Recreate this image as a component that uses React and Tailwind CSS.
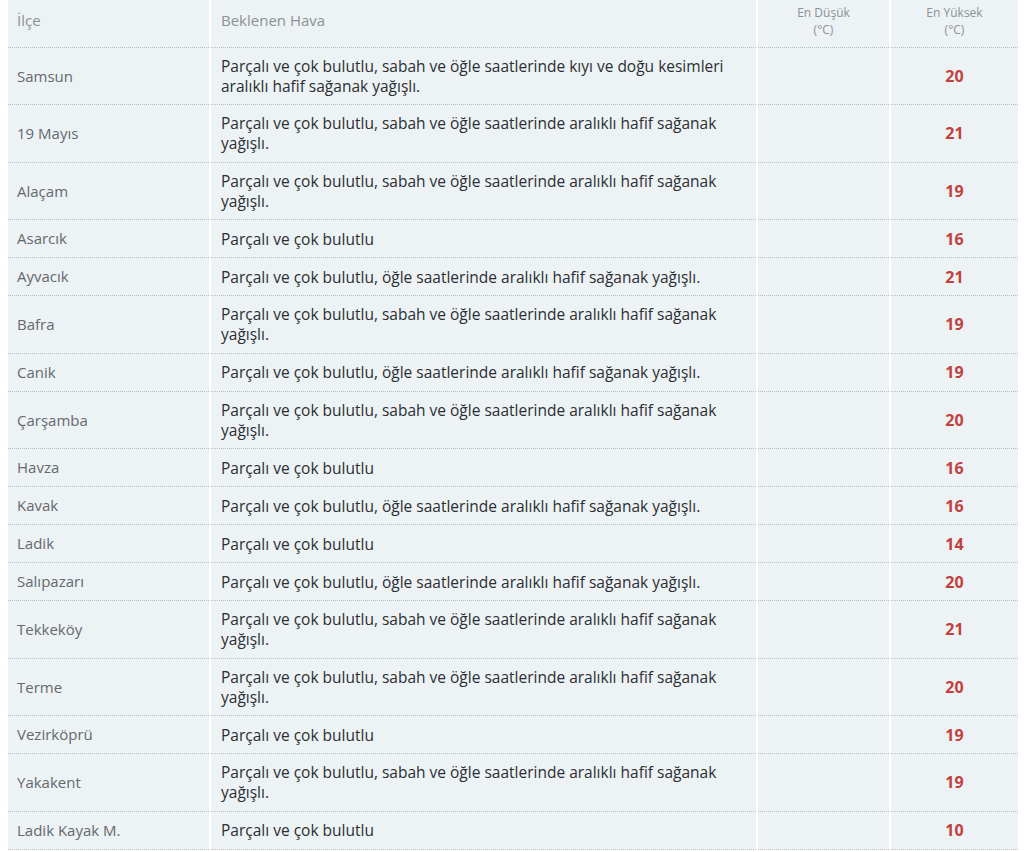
import React from 'react';

const rows = [
    { ilce: 'Samsun', hava: 'Parçalı ve çok bulutlu, sabah ve öğle saatlerinde kıyı ve doğu kesimleri aralıklı hafif sağanak yağışlı.', max: 20, two: true },
    { ilce: '19 Mayıs', hava: 'Parçalı ve çok bulutlu, sabah ve öğle saatlerinde aralıklı hafif sağanak yağışlı.', max: 21, two: true },
    { ilce: 'Alaçam', hava: 'Parçalı ve çok bulutlu, sabah ve öğle saatlerinde aralıklı hafif sağanak yağışlı.', max: 19, two: true },
    { ilce: 'Asarcık', hava: 'Parçalı ve çok bulutlu', max: 16 },
    { ilce: 'Ayvacık', hava: 'Parçalı ve çok bulutlu, öğle saatlerinde aralıklı hafif sağanak yağışlı.', max: 21 },
    { ilce: 'Bafra', hava: 'Parçalı ve çok bulutlu, sabah ve öğle saatlerinde aralıklı hafif sağanak yağışlı.', max: 19, two: true },
    { ilce: 'Canik', hava: 'Parçalı ve çok bulutlu, öğle saatlerinde aralıklı hafif sağanak yağışlı.', max: 19 },
    { ilce: 'Çarşamba', hava: 'Parçalı ve çok bulutlu, sabah ve öğle saatlerinde aralıklı hafif sağanak yağışlı.', max: 20, two: true },
    { ilce: 'Havza', hava: 'Parçalı ve çok bulutlu', max: 16 },
    { ilce: 'Kavak', hava: 'Parçalı ve çok bulutlu, öğle saatlerinde aralıklı hafif sağanak yağışlı.', max: 16 },
    { ilce: 'Ladik', hava: 'Parçalı ve çok bulutlu', max: 14 },
    { ilce: 'Salıpazarı', hava: 'Parçalı ve çok bulutlu, öğle saatlerinde aralıklı hafif sağanak yağışlı.', max: 20 },
    { ilce: 'Tekkeköy', hava: 'Parçalı ve çok bulutlu, sabah ve öğle saatlerinde aralıklı hafif sağanak yağışlı.', max: 21, two: true },
    { ilce: 'Terme', hava: 'Parçalı ve çok bulutlu, sabah ve öğle saatlerinde aralıklı hafif sağanak yağışlı.', max: 20, two: true },
    { ilce: 'Vezirköprü', hava: 'Parçalı ve çok bulutlu', max: 19 },
    { ilce: 'Yakakent', hava: 'Parçalı ve çok bulutlu, sabah ve öğle saatlerinde aralıklı hafif sağanak yağışlı.', max: 19, two: true },
    { ilce: 'Ladik Kayak M.', hava: 'Parçalı ve çok bulutlu', max: 10 },
];

export default function App() {
    return (
        <div className="bg-white pl-2 pr-[6px] font-['Open_Sans',sans-serif]">
            <table className="w-[1010px] table-fixed border-collapse bg-[#edf2f5]">
                <colgroup>
                    <col className="w-[202px]" />
                    <col className="w-[547px]" />
                    <col className="w-[133px]" />
                    <col className="w-[128px]" />
                </colgroup>
                <thead>
                    <tr className="h-[47px] border-b border-dotted border-[#b9c0c5] text-[#8c9195]">
                        <th className="border-r-2 border-white pb-[6px] pl-[9px] text-left text-[15px] font-normal">İlçe</th>
                        <th className="border-r-2 border-white pb-[6px] pl-[10px] text-left text-[15px] font-normal">Beklenen Hava</th>
                        <th className="border-r-2 border-white pb-[4px] text-center text-[12px] font-normal leading-[17px]">En Düşük<br />(°C)</th>
                        <th className="pb-[4px] text-center text-[12px] font-normal leading-[17px]">En Yüksek<br />(°C)</th>
                    </tr>
                </thead>
                <tbody>
                    {rows.map((r) => (
                        <tr
                            key={r.ilce}
                            className={`border-b border-dotted border-[#b9c0c5] ${r.two ? 'h-[57.5px]' : 'h-[38px]'}`}
                        >
                            <td className="border-r-2 border-white pl-[9px] text-[15px] text-[#65696d]">{r.ilce}</td>
                            <td className="border-r-2 border-white pl-[10px] pr-6 text-[15.5px] leading-[20px] text-[#2b2f32]">{r.hava}</td>
                            <td className="border-r-2 border-white"></td>
                            <td className="text-center text-[16px] font-bold text-[#c2403d]">{r.max}</td>
                        </tr>
                    ))}
                </tbody>
            </table>
        </div>
    );
}
